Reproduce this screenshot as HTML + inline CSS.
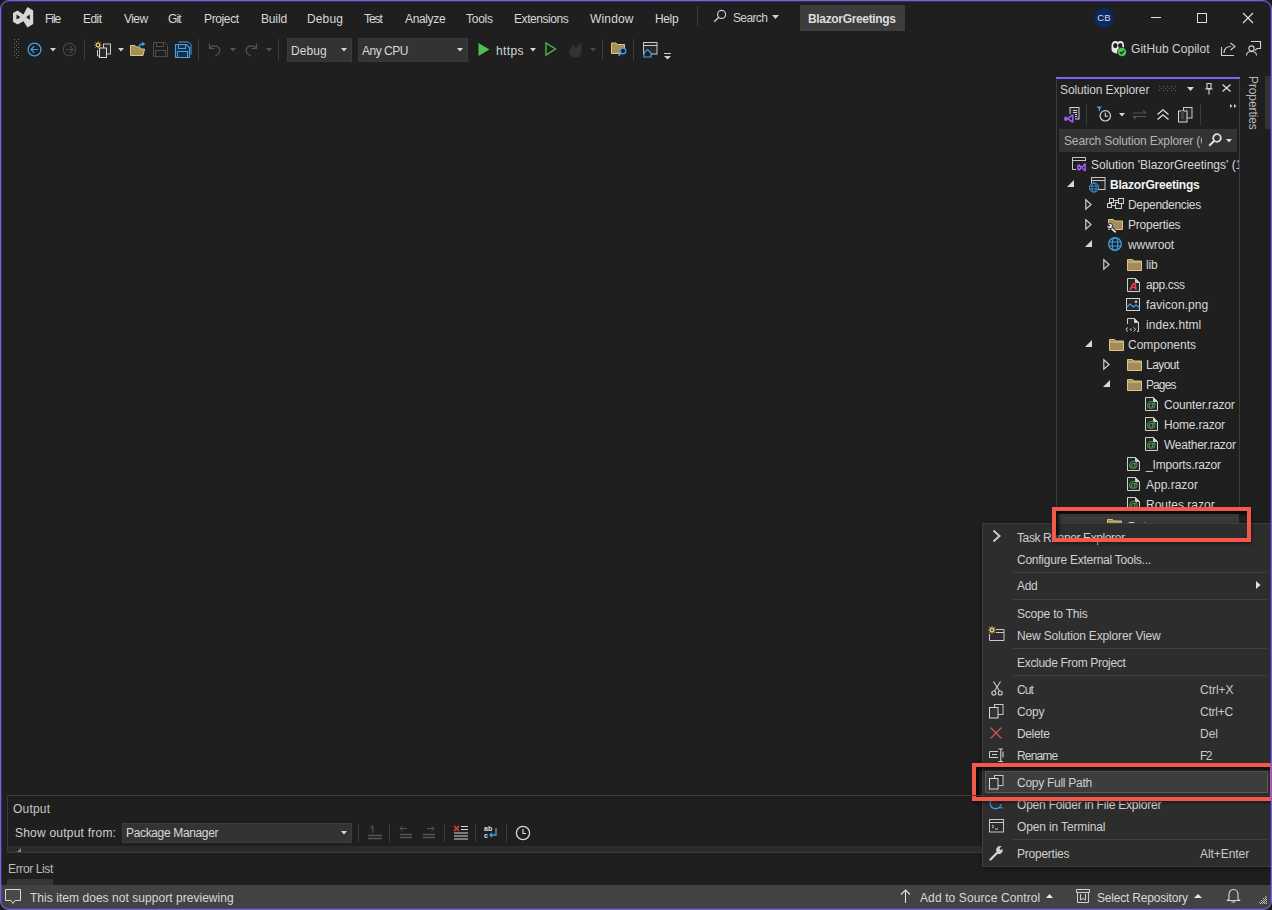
<!DOCTYPE html>
<html><head><meta charset="utf-8">
<style>
*{margin:0;padding:0;box-sizing:border-box}
html,body{width:1272px;height:910px;overflow:hidden;background:#1a1a1a}
body{position:relative;font-family:"Liberation Sans",sans-serif;font-size:12px;color:#f0f0f0}
.win{position:absolute;left:0;top:0;width:1272px;height:910px;background:#1f1f1f;overflow:hidden}
.frame{position:absolute;left:0;top:0;width:1272px;height:910px;border:1px solid #7662ea;border-radius:9px;box-shadow:0 0 0 12px #1a1a1a, inset 0 0 0 1px rgba(118,98,234,0.28);pointer-events:none}
.a{position:absolute;white-space:nowrap}
.t{position:absolute;white-space:nowrap;line-height:14px;height:14px}
svg.a{overflow:visible}
</style></head><body>
<div class="win">

<svg class="a" style="left:12px;top:6px" width="22" height="22" viewBox="0 0 22 22"><path d="M1 7 L5.5 4.5 L11.5 8.6 L15.4 1 L21.2 4.4 L21.2 18 L15.4 21.4 L11.5 15.2 L5.5 18.5 L1 15.7 Z" fill="#d6d6d6"/><path d="M4.5 8.6 L8.5 11.2 L4.5 13.6 Z" fill="#1f1f1f"/><path d="M17.8 8.4 L14.2 11.2 L17.8 14 Z" fill="#1f1f1f"/></svg>
<span class="t" id="w1" style="left:45px;top:12px;color:rgb(216,216,216);;letter-spacing:-1.021px">File</span>
<span class="t" id="w2" style="left:83px;top:12px;color:rgb(216,216,216);;letter-spacing:-0.548px">Edit</span>
<span class="t" id="w3" style="left:124px;top:12px;color:rgb(216,216,216);;letter-spacing:-0.542px">View</span>
<span class="t" id="w4" style="left:168px;top:12px;color:rgb(216,216,216);;letter-spacing:-0.900px">Git</span>
<span class="t" id="w5" style="left:204px;top:12px;color:rgb(216,216,216);;letter-spacing:-0.369px">Project</span>
<span class="t" id="w6" style="left:261px;top:12px;color:rgb(216,216,216);;letter-spacing:-0.152px">Build</span>
<span class="t" id="w7" style="left:307px;top:12px;color:rgb(216,216,216);;letter-spacing:0.128px">Debug</span>
<span class="t" id="w8" style="left:364px;top:12px;color:rgb(216,216,216);;letter-spacing:-1.058px">Test</span>
<span class="t" id="w9" style="left:405px;top:12px;color:rgb(216,216,216);;letter-spacing:-0.353px">Analyze</span>
<span class="t" id="w10" style="left:466px;top:12px;color:rgb(216,216,216);;letter-spacing:-0.253px">Tools</span>
<span class="t" id="w11" style="left:514px;top:12px;color:rgb(216,216,216);;letter-spacing:-0.433px">Extensions</span>
<span class="t" id="w12" style="left:590px;top:12px;color:rgb(216,216,216);;letter-spacing:0.157px">Window</span>
<span class="t" id="w13" style="left:655px;top:12px;color:rgb(216,216,216);;letter-spacing:-0.369px">Help</span>
<div class="a" style="left:697px;top:6px;width:1px;height:20px;background:#3d3d3d"></div>
<svg class="a" style="left:713px;top:9px" width="14" height="14" viewBox="0 0 14 14"><circle cx="8.6" cy="5.4" r="4" fill="none" stroke="#d0d0d0" stroke-width="1.2"/><path d="M5.8 8.2 L1.2 12.8" stroke="#d0d0d0" stroke-width="1.3"/></svg>
<span class="t" id="w14" style="left:733px;top:11px;color:rgb(208,208,208);;letter-spacing:-0.630px">Search</span>
<svg class="a" style="left:772px;top:15px" width="7" height="4" viewBox="0 0 7 4"><path d="M0 0 H7 L3.5 4 Z" fill="#d0d0d0"/></svg>
<div class="a" style="left:800px;top:5px;width:105px;height:26px;background:#3d3d3d"></div>
<span class="t" id="w15" style="left:808px;top:12px;color:rgb(219,219,219);font-weight:bold;letter-spacing:-0.337px">BlazorGreetings</span>
<div class="a" style="left:1094px;top:8px;width:20px;height:20px;background:#0c2a60;border-radius:50%"></div>
<span class="t" style="left:1094px;top:11px;width:20px;text-align:center;font-size:9.5px;color:#dcdcdc;letter-spacing:0.2px">CB</span>
<div class="a" style="left:1151px;top:17px;width:10px;height:1px;background:#e0e0e0"></div>
<div class="a" style="left:1197px;top:13px;width:10px;height:10px;border:1px solid #e0e0e0"></div>
<svg class="a" style="left:1243px;top:13px" width="10" height="10" viewBox="0 0 10 10"><path d="M0 0 L10 10 M10 0 L0 10" stroke="#e0e0e0" stroke-width="1.1"/></svg>
<svg class="a" style="left:14px;top:39px" width="6" height="20" viewBox="0 0 6 20"><rect x="0" y="0" width="1" height="1" fill="#707070"/><rect x="4" y="0" width="1" height="1" fill="#707070"/><rect x="2" y="2" width="1" height="1" fill="#707070"/><rect x="0" y="4" width="1" height="1" fill="#707070"/><rect x="4" y="4" width="1" height="1" fill="#707070"/><rect x="2" y="6" width="1" height="1" fill="#707070"/><rect x="0" y="8" width="1" height="1" fill="#707070"/><rect x="4" y="8" width="1" height="1" fill="#707070"/><rect x="2" y="10" width="1" height="1" fill="#707070"/><rect x="0" y="12" width="1" height="1" fill="#707070"/><rect x="4" y="12" width="1" height="1" fill="#707070"/><rect x="2" y="14" width="1" height="1" fill="#707070"/><rect x="0" y="16" width="1" height="1" fill="#707070"/><rect x="4" y="16" width="1" height="1" fill="#707070"/><rect x="2" y="18" width="1" height="1" fill="#707070"/></svg>
<svg class="a" style="left:27px;top:42px" width="15" height="15" viewBox="0 0 15 15"><circle cx="7.5" cy="7.5" r="6.4" fill="none" stroke="#3ea0ec" stroke-width="1.3"/><path d="M4 7.5 H11.2 M7.2 4.2 L4 7.5 L7.2 10.8" fill="none" stroke="#3ea0ec" stroke-width="1.2"/></svg>
<svg class="a" style="left:50px;top:48px" width="6" height="4" viewBox="0 0 6 4"><path d="M0 0 H6 L3 3.5 Z" fill="#d0d0d0"/></svg>
<svg class="a" style="left:62px;top:42px" width="15" height="15" viewBox="0 0 15 15"><circle cx="7.5" cy="7.5" r="6.2" fill="none" stroke="#4a4a4a" stroke-width="1.1"/><path d="M3.8 7.5 H11 M7.8 4.2 L11 7.5 L7.8 10.8" fill="none" stroke="#4a4a4a" stroke-width="1.1"/></svg>
<div class="a" style="left:84px;top:39px;width:1px;height:21px;background:#3d3d3d"></div>
<svg class="a" style="left:94px;top:41px" width="18" height="17" viewBox="0 0 18 17"><g stroke="#e8c46a" stroke-width="1"><path d="M4 0.5 V7.5 M0.5 4 H7.5 M1.5 1.5 L6.5 6.5 M6.5 1.5 L1.5 6.5"/></g><circle cx="4" cy="4" r="1.6" fill="#1f1f1f" stroke="#e8c46a"/><rect x="9.5" y="3" width="7" height="10" fill="#2a2a2a" stroke="#c8c8c8"/><rect x="5.5" y="7" width="7" height="9.5" fill="#2a2a2a" stroke="#d8d8d8"/><path d="M3.5 9 V15 H5.5" fill="none" stroke="#c8c8c8"/></svg>
<svg class="a" style="left:118px;top:48px" width="6" height="4" viewBox="0 0 6 4"><path d="M0 0 H6 L3 3.5 Z" fill="#d0d0d0"/></svg>
<svg class="a" style="left:130px;top:41px" width="16" height="15" viewBox="0 0 16 15"><path d="M0.5 4.5 H5 L6.5 6 H10 V8 H14.5 L13 14.5 H0.5 Z" fill="#a38e5c" stroke="#e6c674" stroke-width="1"/><path d="M9 7 C9 4 10.5 3 13 3" fill="none" stroke="#3ea0ec" stroke-width="1.4"/><path d="M12 0.8 L15.5 3 L12 5.2 Z" fill="#3ea0ec"/></svg>
<svg class="a" style="left:153px;top:42px" width="15" height="15" viewBox="0 0 15 15"><path d="M0.5 0.5 H11.5 L14.5 3.5 V14.5 H0.5 Z" fill="none" stroke="#4d4d4d"/><rect x="3.5" y="0.5" width="7" height="4" fill="none" stroke="#4d4d4d"/><rect x="2.5" y="8.5" width="10" height="6" fill="none" stroke="#4d4d4d"/></svg>
<svg class="a" style="left:175px;top:41px" width="17" height="17" viewBox="0 0 17 17"><path d="M3.5 1 H13.5 L16 3.5 V13.5" fill="none" stroke="#3ea0ec"/><path d="M0.5 3.5 H11.5 L14.5 6.5 V16.5 H0.5 Z" fill="#1f2f40" stroke="#3ea0ec" stroke-width="1.2"/><rect x="3.5" y="3.5" width="7" height="4" fill="none" stroke="#3ea0ec"/><rect x="2.5" y="10.5" width="10" height="6" fill="none" stroke="#3ea0ec"/></svg>
<div class="a" style="left:198px;top:39px;width:1px;height:21px;background:#3d3d3d"></div>
<svg class="a" style="left:207px;top:42px" width="15" height="15" viewBox="0 0 15 15"><path d="M2.5 1.5 V6.5 H7.5" fill="none" stroke="#555" stroke-width="1.2"/><path d="M3 6 C5 3 11 3 12.5 7 C13.5 10 11 13 8 14" fill="none" stroke="#555" stroke-width="1.2"/></svg>
<svg class="a" style="left:230px;top:48px" width="6" height="4" viewBox="0 0 6 4"><path d="M0 0 H6 L3 3.5 Z" fill="#555"/></svg>
<svg class="a" style="left:244px;top:42px" width="15" height="15" viewBox="0 0 15 15"><path d="M12.5 1.5 V6.5 H7.5" fill="none" stroke="#555" stroke-width="1.2"/><path d="M12 6 C10 3 4 3 2.5 7 C1.5 10 4 13 7 14" fill="none" stroke="#555" stroke-width="1.2"/></svg>
<svg class="a" style="left:266px;top:48px" width="6" height="4" viewBox="0 0 6 4"><path d="M0 0 H6 L3 3.5 Z" fill="#555"/></svg>
<div class="a" style="left:278px;top:39px;width:1px;height:21px;background:#3d3d3d"></div>
<div class="a" style="left:287px;top:38px;width:65px;height:24px;background:#333333;border:1px solid #3a3a3a"></div>
<span class="t" id="w16" style="left:291px;top:44px;color:rgb(216,216,216);;letter-spacing:0.053px">Debug</span>
<svg class="a" style="left:341px;top:48px" width="6" height="4" viewBox="0 0 6 4"><path d="M0 0 H6 L3 3.5 Z" fill="#d8d8d8"/></svg>
<div class="a" style="left:358px;top:38px;width:110px;height:24px;background:#333333;border:1px solid #3a3a3a"></div>
<span class="t" id="w17" style="left:362px;top:44px;color:rgb(216,216,216);;letter-spacing:-0.497px">Any CPU</span>
<svg class="a" style="left:457px;top:48px" width="6" height="4" viewBox="0 0 6 4"><path d="M0 0 H6 L3 3.5 Z" fill="#d8d8d8"/></svg>
<svg class="a" style="left:478px;top:43px" width="12" height="13" viewBox="0 0 12 13"><path d="M0.5 0 L11.5 6.5 L0.5 13 Z" fill="#4ec052"/></svg>
<span class="t" id="w18" style="left:496px;top:44px;color:rgb(216,216,216);;letter-spacing:0.371px">https</span>
<svg class="a" style="left:530px;top:48px" width="6" height="4" viewBox="0 0 6 4"><path d="M0 0 H6 L3 3.5 Z" fill="#d8d8d8"/></svg>
<svg class="a" style="left:545px;top:42px" width="12" height="14" viewBox="0 0 12 14"><path d="M1 1 L10.5 7 L1 13 Z" fill="none" stroke="#4ec052" stroke-width="1.3"/></svg>
<svg class="a" style="left:568px;top:42px" width="15" height="16" viewBox="0 0 15 16"><path d="M7 15.5 C2 15.5 0.5 12 1.5 8.5 C2.5 6 4.5 5 5.5 2.5 C7 4 7.5 5.5 7.5 7 C9 5 10.5 2 14 0.5 C12 4 14.5 7 13.5 10.5 C12.8 13.5 10.5 15.5 7 15.5 Z" fill="#333"/></svg>
<svg class="a" style="left:590px;top:48px" width="6" height="4" viewBox="0 0 6 4"><path d="M0 0 H6 L3 3.5 Z" fill="#4a4a4a"/></svg>
<div class="a" style="left:602px;top:39px;width:1px;height:21px;background:#3d3d3d"></div>
<svg class="a" style="left:611px;top:42px" width="17" height="15" viewBox="0 0 17 15"><path d="M0.5 1 H5 L6.5 2.5 H13.5 V11.5 H0.5 Z" fill="#a38e5c" stroke="#e6c674"/><circle cx="12" cy="9" r="2.8" fill="#1f1f1f" stroke="#3ea0ec" stroke-width="1.3"/><path d="M10 11 L7.5 14" stroke="#3ea0ec" stroke-width="1.3"/></svg>
<div class="a" style="left:633px;top:39px;width:1px;height:21px;background:#3d3d3d"></div>
<svg class="a" style="left:643px;top:42px" width="15" height="16" viewBox="0 0 15 16"><rect x="0.5" y="0.5" width="13.5" height="11.5" fill="#2a2a2a" stroke="#c8c8c8"/><path d="M0.5 3.5 H14" stroke="#c8c8c8"/><path d="M1 11 L4.5 7.5 L8 11 V15 H1 Z" fill="#1f1f1f" stroke="#3ea0ec" stroke-width="1.2"/></svg>
<svg class="a" style="left:664px;top:53px" width="7" height="7" viewBox="0 0 7 7"><path d="M0 0.5 H7" stroke="#d0d0d0"/><path d="M0 3 H7 L3.5 6.5 Z" fill="#d0d0d0"/></svg>
<svg class="a" style="left:1110px;top:40px" width="17" height="17" viewBox="0 0 17 17"><path d="M1.5 6 C1.5 2.5 3 1 5.5 1 C6.8 1 7.5 1.5 8 2 C8.5 1.5 9.2 1 10.5 1 C13 1 14 2.5 14 6 V9 C14 12 11 13.5 7.8 13.5 C4.5 13.5 1.5 12 1.5 9 Z" fill="#e8e8e8"/><ellipse cx="5.3" cy="5.6" rx="2.2" ry="2.6" fill="#1f1f1f"/><ellipse cx="10.3" cy="5.6" rx="2.2" ry="2.6" fill="#1f1f1f"/><circle cx="12" cy="12" r="4.6" fill="#4cc85a" stroke="#1f1f1f" stroke-width="0.8"/><path d="M9.8 12 L11.4 13.6 L14.2 10.6" fill="none" stroke="#0c200c" stroke-width="1.2"/></svg>
<span class="t" id="w19" style="left:1131px;top:42px;color:rgb(208,208,208);;letter-spacing:0.046px">GitHub Copilot</span>
<svg class="a" style="left:1221px;top:42px" width="15" height="14" viewBox="0 0 15 14"><path d="M0.5 5 V13.5 H13" fill="none" stroke="#d0d0d0" stroke-width="1.1"/><path d="M3 11 C3 6 6 4.5 10 4.5" fill="none" stroke="#d0d0d0" stroke-width="1.2"/><path d="M9.5 1 L14 4.5 L9.5 8" fill="none" stroke="#d0d0d0" stroke-width="1.1"/></svg>
<svg class="a" style="left:1246px;top:41px" width="15" height="15" viewBox="0 0 15 15"><path d="M5 0.5 H14.5 V7.5 H11 L9 9.5" fill="none" stroke="#d0d0d0" stroke-width="1.1"/><circle cx="5.5" cy="7.5" r="2.6" fill="#1f1f1f" stroke="#d0d0d0" stroke-width="1.1"/><path d="M0.5 14.5 C0.5 11.5 2.5 10.5 5.5 10.5 C8.5 10.5 10.5 11.5 10.5 14.5" fill="none" stroke="#d0d0d0" stroke-width="1.1"/></svg>
<!--SE-->
<div class="a" style="left:1056px;top:77px;width:184px;height:450px;border-left:1px solid #3b3b3b;border-right:1px solid #3b3b3b"></div>
<div class="a" style="left:1056px;top:77px;width:184px;height:2px;background:#7a66f0"></div>
<span class="t" id="w20" style="left:1060px;top:83px;color:rgb(208,208,208);;letter-spacing:-0.124px">Solution Explorer</span>
<svg class="a" style="left:1159px;top:86px" width="18" height="5" viewBox="0 0 18 5"><rect x="0" y="0" width="1" height="1" fill="#606060"/><rect x="4" y="0" width="1" height="1" fill="#606060"/><rect x="8" y="0" width="1" height="1" fill="#606060"/><rect x="12" y="0" width="1" height="1" fill="#606060"/><rect x="16" y="0" width="1" height="1" fill="#606060"/><rect x="2" y="2" width="1" height="1" fill="#606060"/><rect x="6" y="2" width="1" height="1" fill="#606060"/><rect x="10" y="2" width="1" height="1" fill="#606060"/><rect x="14" y="2" width="1" height="1" fill="#606060"/><rect x="0" y="4" width="1" height="1" fill="#606060"/><rect x="4" y="4" width="1" height="1" fill="#606060"/><rect x="8" y="4" width="1" height="1" fill="#606060"/><rect x="12" y="4" width="1" height="1" fill="#606060"/><rect x="16" y="4" width="1" height="1" fill="#606060"/></svg>
<svg class="a" style="left:1187px;top:87px" width="7" height="4" viewBox="0 0 7 4"><path d="M0 0 H7 L3.5 4 Z" fill="#d8d8d8"/></svg>
<svg class="a" style="left:1205px;top:83px" width="8" height="12" viewBox="0 0 8 12"><path d="M2 0.5 H6 V5.5 H2 Z" fill="none" stroke="#d8d8d8" stroke-width="1.1"/><path d="M0.3 6 H7.7 M4 6 V11.5" fill="none" stroke="#d8d8d8" stroke-width="1.1"/></svg>
<svg class="a" style="left:1221.5px;top:84px" width="9" height="8" viewBox="0 0 9 8"><path d="M0.5 0.5 L8.5 7.5 M8.5 0.5 L0.5 7.5" stroke="#e0e0e0" stroke-width="1.2"/></svg>
<svg class="a" style="left:1064px;top:107px" width="16" height="16" viewBox="0 0 16 16"><rect x="6" y="0.5" width="9" height="11.5" fill="#2a2a2a" stroke="#d0d0d0"/><path d="M9 3.5 H13 M9 5.5 H13 M9 7.5 H13 M9 9.5 H13" stroke="#d0d0d0"/><path d="M0 7 H11 V16 H0 Z" fill="#1f1f1f"/><path d="M1 10 V13.5 M1.2 10 L8.5 15 M1.2 13.5 L8.5 8 M8.8 7.5 V15.5" fill="none" stroke="#9b59f0" stroke-width="1.6"/></svg>
<div class="a" style="left:1086px;top:104px;width:1px;height:21px;background:#3d3d3d"></div>
<svg class="a" style="left:1096px;top:106px" width="17" height="17" viewBox="0 0 17 17"><path d="M0.5 0.5 H6 L4 3 V5.5 L2.8 4.5 V3 Z" fill="#3ea0ec"/><circle cx="9.3" cy="9.8" r="5.2" fill="none" stroke="#d8d8d8" stroke-width="1.2"/><path d="M9.3 6.8 V10.2 H12" fill="none" stroke="#d8d8d8" stroke-width="1.1"/></svg>
<svg class="a" style="left:1119px;top:113px" width="6" height="4" viewBox="0 0 6 4"><path d="M0 0 H6 L3 3.5 Z" fill="#d8d8d8"/></svg>
<svg class="a" style="left:1133px;top:110px" width="14" height="10" viewBox="0 0 14 10"><path d="M0 3 H13 M10 0.5 L13 3 M13 6.5 H0 M3 9 L0 6.5" fill="none" stroke="#555" stroke-width="1.1"/></svg>
<svg class="a" style="left:1157px;top:109px" width="12" height="11" viewBox="0 0 12 11"><path d="M0.5 5.5 L6 0.8 L11.5 5.5 M0.5 10.5 L6 5.8 L11.5 10.5" fill="none" stroke="#e0e0e0" stroke-width="1.3"/></svg>
<svg class="a" style="left:1178px;top:107px" width="15" height="16" viewBox="0 0 15 16"><rect x="5.5" y="0.5" width="8.5" height="10.5" fill="#2a2a2a" stroke="#c8c8c8"/><rect x="0.5" y="4" width="8.5" height="11" fill="#2a2a2a" stroke="#d8d8d8"/><rect x="3" y="4" width="3" height="8" fill="#444"/></svg>
<div class="a" style="left:1200px;top:104px;width:1px;height:21px;background:#3d3d3d"></div>
<svg class="a" style="left:1230px;top:104px" width="7" height="4" viewBox="0 0 7 4"><path d="M0 0 L2.5 2 L0 4 Z M4 0 L6.5 2 L4 4 Z" fill="#d0d0d0"/></svg>
<div class="a" style="left:1059px;top:129px;width:178px;height:23px;background:#333333"></div>
<span class="t" style="left:1064px;top:134px;color:rgb(180,180,180);width:138px;overflow:hidden;letter-spacing:-0.15px">Search Solution Explorer (Ctrl+;)</span>
<svg class="a" style="left:1208px;top:133px" width="14" height="14" viewBox="0 0 14 14"><circle cx="9" cy="5" r="3.8" fill="none" stroke="#e0e0e0" stroke-width="1.8"/><path d="M6.5 7.5 L1.2 12.8" stroke="#e0e0e0" stroke-width="2"/></svg>
<svg class="a" style="left:1226px;top:139px" width="6" height="4" viewBox="0 0 6 4"><path d="M0 0 H6 L3 3.5 Z" fill="#d8d8d8"/></svg>
<div class="a" style="left:1057px;top:153px;width:182px;height:354px;overflow:hidden">
<svg class="a" style="left:15px;top:4px" width="15" height="15"><path d="M4 12.5 H0.5 V0.5 H13.5 V4" fill="none" stroke="#c8c8c8"/><path d="M0.5 3.5 H13.5" stroke="#c8c8c8"/><path d="M5 8.5 L7 7 L10 9.5 L12.5 6 L14 7 V13.5 L12.5 14.5 L10 11.5 L7 14 L5 12.5 Z" fill="#9b59f0"/><path d="M6.5 9.5 L8.3 10.7 L6.5 11.8 Z M12.5 9 L10.8 10.7 L12.5 12.3 Z" fill="#1f1f1f"/></svg>
<span class="t" style="left:34px;top:5px;color:rgb(216,216,216);">Solution 'BlazorGreetings' (1 of 1 project)</span>
<svg class="a" style="left:10px;top:27px" width="7" height="7"><path d="M7 0 V7 H0 Z" fill="#d8d8d8"/></svg>
<svg class="a" style="left:32px;top:24px" width="17" height="15"><rect x="2.5" y="0.5" width="13.5" height="12" fill="#262626" stroke="#c8c8c8"/><path d="M2.5 3.5 H16" stroke="#c8c8c8"/><g transform="translate(0 5.5) scale(0.72)"><circle cx="7" cy="7" r="6.3" fill="#1f1f1f" stroke="#3ea0ec" stroke-width="1.3"/><ellipse cx="7" cy="7" rx="2.8" ry="6.3" fill="none" stroke="#3ea0ec" stroke-width="1.1"/><path d="M0.8 5 H13.2 M0.8 9 H13.2" stroke="#3ea0ec" stroke-width="1.1"/></g></svg>
<span class="t" id="w21" style="left:53px;top:25px;color:rgb(216,216,216);font-weight:bold;color:#f4f4f4;letter-spacing:-0.208px">BlazorGreetings</span>
<svg class="a" style="left:28px;top:46px" width="7" height="11"><path d="M0.8 0.8 L6 5.5 L0.8 10.2 Z" fill="none" stroke="#d0d0d0" stroke-width="1.2"/></svg>
<svg class="a" style="left:49.5px;top:45px" width="17" height="12"><rect x="0.5" y="5.5" width="4" height="4" fill="none" stroke="#d0d0d0"/><rect x="2.5" y="0.5" width="4" height="4" fill="none" stroke="#d0d0d0"/><rect x="8.5" y="4.5" width="6" height="6" fill="#262626" stroke="#d0d0d0"/><rect x="11.5" y="0.5" width="5" height="5" fill="#262626" stroke="#d0d0d0"/><path d="M4.5 7.5 H8.5 M6.5 2.5 H11.5" stroke="#d0d0d0"/></svg>
<span class="t" id="w22" style="left:71px;top:45px;color:rgb(216,216,216);;letter-spacing:-0.320px">Dependencies</span>
<svg class="a" style="left:28px;top:66px" width="7" height="11"><path d="M0.8 0.8 L6 5.5 L0.8 10.2 Z" fill="none" stroke="#d0d0d0" stroke-width="1.2"/></svg>
<svg class="a" style="left:50px;top:65px" width="16" height="15"><path d="M1.5 1.5 H6.5 L8 3 H15.5 V11.5 H1.5 Z" fill="#a08c60" stroke="#e3c477"/><path d="M3.5 9.5 L8.2 13.8" stroke="#1f1f1f" stroke-width="3.6" stroke-linecap="round"/><path d="M3.5 9.5 L8.2 13.8" stroke="#e0e0e0" stroke-width="1.8" stroke-linecap="round"/><circle cx="2.8" cy="8" r="2.8" fill="#e0e0e0" stroke="#1f1f1f" stroke-width="0.8"/><path d="M0 6 L2.6 8.2" stroke="#1f1f1f" stroke-width="1.6"/></svg>
<span class="t" id="w23" style="left:71px;top:65px;color:rgb(216,216,216);;letter-spacing:-0.232px">Properties</span>
<svg class="a" style="left:28px;top:87px" width="7" height="7"><path d="M7 0 V7 H0 Z" fill="#d8d8d8"/></svg>
<svg class="a" style="left:51px;top:84px" width="15" height="15"><circle cx="7" cy="7" r="6.3" fill="#1f1f1f" stroke="#3ea0ec" stroke-width="1.3"/><ellipse cx="7" cy="7" rx="2.8" ry="6.3" fill="none" stroke="#3ea0ec" stroke-width="1.1"/><path d="M0.8 5 H13.2 M0.8 9 H13.2" stroke="#3ea0ec" stroke-width="1.1"/></svg>
<span class="t" id="w24" style="left:71px;top:85px;color:rgb(216,216,216);;letter-spacing:-0.090px">wwwroot</span>
<svg class="a" style="left:46px;top:106px" width="7" height="11"><path d="M0.8 0.8 L6 5.5 L0.8 10.2 Z" fill="none" stroke="#d0d0d0" stroke-width="1.2"/></svg>
<svg class="a" style="left:69.5px;top:105px" width="15" height="13"><path d="M0.5 1.5 H5.5 L7 3 H14.5 V12.5 H0.5 Z" fill="#a08c60" stroke="#e3c477"/><path d="M0.5 4 H14.5" stroke="#e3c477"/></svg>
<span class="t" id="w25" style="left:89px;top:105px;color:rgb(216,216,216);;letter-spacing:-0.216px">lib</span>
<svg class="a" style="left:70px;top:125px" width="13" height="14"><path d="M0.5 0.5 H8.5 L12.5 4.5 V13.5 H0.5 Z" fill="#262626" stroke="#d0d0d0"/><path d="M8.5 0.5 V4.5 H12.5" fill="#d0d0d0" stroke="#d0d0d0"/><path d="M3 12 L6.5 5.5 L8 5.5 L9 12 M4.5 9.5 H8.5" fill="none" stroke="#e8405a" stroke-width="1.6"/></svg>
<span class="t" id="w26" style="left:89px;top:125px;color:rgb(216,216,216);;letter-spacing:-0.393px">app.css</span>
<svg class="a" style="left:69px;top:145px" width="15" height="13"><rect x="0.5" y="0.5" width="13" height="12" fill="#262626" stroke="#d0d0d0"/><circle cx="10" cy="3.8" r="1.3" fill="#e8c46a"/><path d="M1 9 L4 6 L7.5 9 L10 7 L13.5 9.5" fill="none" stroke="#3ea0ec" stroke-width="1.1"/></svg>
<span class="t" id="w27" style="left:89px;top:145px;color:rgb(216,216,216);;letter-spacing:0.090px">favicon.png</span>
<svg class="a" style="left:68px;top:165px" width="15" height="15"><path d="M2.5 6 V0.5 H9.5 L13.5 4.5 V13.5 H12" fill="#262626" stroke="#d0d0d0"/><path d="M9.5 0.5 V4.5 H13.5" fill="#d0d0d0" stroke="#d0d0d0"/><path d="M3 9.5 L0.8 11.5 L3 13.5 M8.5 9.5 L10.7 11.5 L8.5 13.5" fill="none" stroke="#d0d0d0"/><circle cx="5.8" cy="11.5" r="1.2" fill="#3ea0ec"/></svg>
<span class="t" id="w28" style="left:89px;top:165px;color:rgb(216,216,216);;letter-spacing:0.064px">index.html</span>
<svg class="a" style="left:28px;top:187px" width="7" height="7"><path d="M7 0 V7 H0 Z" fill="#d8d8d8"/></svg>
<svg class="a" style="left:51.5px;top:185px" width="15" height="13"><path d="M0.5 1.5 H5.5 L7 3 H14.5 V12.5 H0.5 Z" fill="#a08c60" stroke="#e3c477"/><path d="M0.5 4 H14.5" stroke="#e3c477"/></svg>
<span class="t" id="w29" style="left:71px;top:185px;color:rgb(216,216,216);;letter-spacing:-0.004px">Components</span>
<svg class="a" style="left:46px;top:206px" width="7" height="11"><path d="M0.8 0.8 L6 5.5 L0.8 10.2 Z" fill="none" stroke="#d0d0d0" stroke-width="1.2"/></svg>
<svg class="a" style="left:69.5px;top:205px" width="15" height="13"><path d="M0.5 1.5 H5.5 L7 3 H14.5 V12.5 H0.5 Z" fill="#a08c60" stroke="#e3c477"/><path d="M0.5 4 H14.5" stroke="#e3c477"/></svg>
<span class="t" id="w30" style="left:89px;top:205px;color:rgb(216,216,216);;letter-spacing:-0.539px">Layout</span>
<svg class="a" style="left:46px;top:227px" width="7" height="7"><path d="M7 0 V7 H0 Z" fill="#d8d8d8"/></svg>
<svg class="a" style="left:69.5px;top:225px" width="15" height="13"><path d="M0.5 1.5 H5.5 L7 3 H14.5 V12.5 H0.5 Z" fill="#a08c60" stroke="#e3c477"/><path d="M0.5 4 H14.5" stroke="#e3c477"/></svg>
<span class="t" id="w31" style="left:89px;top:225px;color:rgb(216,216,216);;letter-spacing:-0.906px">Pages</span>
<svg class="a" style="left:88px;top:244px" width="13" height="14"><path d="M0.5 0.5 H8.5 L12.5 4.5 V13.5 H0.5 Z" fill="#262626" stroke="#d0d0d0"/><path d="M8.5 0.5 V4.5 H12.5" fill="#d0d0d0" stroke="#d0d0d0"/><text x="1.6" y="11.3" font-size="9.5" font-family="Liberation Sans" fill="#5ec46a">@</text></svg>
<span class="t" id="w32" style="left:107px;top:245px;color:rgb(216,216,216);;letter-spacing:-0.159px">Counter.razor</span>
<svg class="a" style="left:88px;top:264px" width="13" height="14"><path d="M0.5 0.5 H8.5 L12.5 4.5 V13.5 H0.5 Z" fill="#262626" stroke="#d0d0d0"/><path d="M8.5 0.5 V4.5 H12.5" fill="#d0d0d0" stroke="#d0d0d0"/><text x="1.6" y="11.3" font-size="9.5" font-family="Liberation Sans" fill="#5ec46a">@</text></svg>
<span class="t" id="w33" style="left:107px;top:265px;color:rgb(216,216,216);;letter-spacing:-0.176px">Home.razor</span>
<svg class="a" style="left:88px;top:284px" width="13" height="14"><path d="M0.5 0.5 H8.5 L12.5 4.5 V13.5 H0.5 Z" fill="#262626" stroke="#d0d0d0"/><path d="M8.5 0.5 V4.5 H12.5" fill="#d0d0d0" stroke="#d0d0d0"/><text x="1.6" y="11.3" font-size="9.5" font-family="Liberation Sans" fill="#5ec46a">@</text></svg>
<span class="t" id="w34" style="left:107px;top:285px;color:rgb(216,216,216);;letter-spacing:-0.263px">Weather.razor</span>
<svg class="a" style="left:70px;top:304px" width="13" height="14"><path d="M0.5 0.5 H8.5 L12.5 4.5 V13.5 H0.5 Z" fill="#262626" stroke="#d0d0d0"/><path d="M8.5 0.5 V4.5 H12.5" fill="#d0d0d0" stroke="#d0d0d0"/><text x="1.6" y="11.3" font-size="9.5" font-family="Liberation Sans" fill="#5ec46a">@</text></svg>
<span class="t" id="w35" style="left:89px;top:305px;color:rgb(216,216,216);;letter-spacing:-0.181px">_Imports.razor</span>
<svg class="a" style="left:70px;top:324px" width="13" height="14"><path d="M0.5 0.5 H8.5 L12.5 4.5 V13.5 H0.5 Z" fill="#262626" stroke="#d0d0d0"/><path d="M8.5 0.5 V4.5 H12.5" fill="#d0d0d0" stroke="#d0d0d0"/><text x="1.6" y="11.3" font-size="9.5" font-family="Liberation Sans" fill="#5ec46a">@</text></svg>
<span class="t" id="w36" style="left:89px;top:325px;color:rgb(216,216,216);;letter-spacing:-0.004px">App.razor</span>
<svg class="a" style="left:70px;top:344px" width="13" height="14"><path d="M0.5 0.5 H8.5 L12.5 4.5 V13.5 H0.5 Z" fill="#262626" stroke="#d0d0d0"/><path d="M8.5 0.5 V4.5 H12.5" fill="#d0d0d0" stroke="#d0d0d0"/><text x="1.6" y="11.3" font-size="9.5" font-family="Liberation Sans" fill="#5ec46a">@</text></svg>
<span class="t" style="left:89px;top:345px;color:rgb(216,216,216);">Routes.razor</span>
</div>
<div class="a" style="left:1057px;top:514px;width:182px;height:10px;background:#3a3a3a;border-top:1px solid #4a4a4a;overflow:hidden"></div>
<div class="a" style="left:1057px;top:515px;width:182px;height:9px;overflow:hidden"><svg class="a" style="left:50px;top:3px" width="15" height="13"><path d="M0.5 1.5 H5.5 L7 3 H14.5 V12.5 H0.5 Z" fill="#a08c60" stroke="#e3c477"/><path d="M0.5 4 H14.5" stroke="#e3c477"/></svg><span class="t" style="left:71px;top:5px;color:#e8e8e8">Data</span></div>
<div class="a" style="left:1239px;top:511px;width:9px;height:13px;background:#1f1f1f"></div>
<span class="t" style="left:1246px;top:76px;width:14px;height:53px;color:#b8b8b8;writing-mode:vertical-rl;line-height:14px;letter-spacing:-0.1px">Properties</span>
<div class="a" style="left:1265px;top:76px;width:6px;height:53px;background:#333333"></div>
<!--MENU-->
<div class="a" style="left:982px;top:523px;width:290px;height:344px;background:#2d2d2d;border:1px solid #3c3c3c;box-shadow:0 2px 6px rgba(0,0,0,0.4)"></div>
<div class="a" style="left:1013px;top:572px;width:254px;height:1px;background:#3f3f3f"></div>
<div class="a" style="left:1013px;top:599px;width:254px;height:1px;background:#3f3f3f"></div>
<div class="a" style="left:1013px;top:648px;width:254px;height:1px;background:#3f3f3f"></div>
<div class="a" style="left:1013px;top:675px;width:254px;height:1px;background:#3f3f3f"></div>
<div class="a" style="left:1013px;top:839px;width:254px;height:1px;background:#3f3f3f"></div>
<div class="a" style="left:985px;top:771px;width:283px;height:22px;background:#3d3d3d;border:1px solid #5a5a5a"></div>
<span class="t" id="w37" style="left:1017px;top:531px;color:rgb(208,208,208);;letter-spacing:-0.389px">Task Runner Explorer</span>
<svg class="a" style="left:992px;top:529px" width="10" height="14" viewBox="0 0 10 14"><path d="M1.5 1.5 L7.5 7 L1.5 12.5" fill="none" stroke="#c8c8c8" stroke-width="2"/></svg>
<span class="t" id="w38" style="left:1017px;top:553px;color:rgb(208,208,208);;letter-spacing:-0.246px">Configure External Tools...</span>
<span class="t" id="w39" style="left:1017px;top:579px;color:rgb(208,208,208);;letter-spacing:-0.339px">Add</span>
<svg class="a" style="left:1256px;top:581px" width="5" height="8" viewBox="0 0 5 8"><path d="M0 0 L4.5 4 L0 8 Z" fill="#e0e0e0"/></svg>
<span class="t" id="w40" style="left:1017px;top:607px;color:rgb(208,208,208);;letter-spacing:-0.198px">Scope to This</span>
<span class="t" id="w41" style="left:1017px;top:629px;color:rgb(208,208,208);;letter-spacing:-0.167px">New Solution Explorer View</span>
<svg class="a" style="left:988px;top:626px" width="17" height="16" viewBox="0 0 17 16"><path d="M1.5 8 V14.5 H16 V3.5 H8" fill="#2b2b2b" stroke="#c8c8c8"/><path d="M8 6.5 H16" stroke="#c8c8c8"/><g stroke="#e3c070" stroke-width="1.1"><path d="M4 0.3 V7.7 M0.3 4 H7.7 M1.4 1.4 L6.6 6.6 M6.6 1.4 L1.4 6.6"/></g><circle cx="4" cy="4" r="2.2" fill="#e3c070"/><circle cx="4" cy="4" r="0.9" fill="#2b2b2b"/></svg>
<span class="t" id="w42" style="left:1017px;top:656px;color:rgb(208,208,208);;letter-spacing:-0.309px">Exclude From Project</span>
<span class="t" id="w43" style="left:1017px;top:683px;color:rgb(208,208,208);;letter-spacing:-0.920px">Cut</span>
<span class="t" id="w44" style="left:1200px;top:683px;color:rgb(201,201,201);;letter-spacing:-0.034px">Ctrl+X</span>
<svg class="a" style="left:991px;top:681px" width="12" height="15" viewBox="0 0 12 15"><path d="M2.5 0.5 L8.5 10 M9.5 0.5 L3.5 10" stroke="#d0d0d0" stroke-width="1.1"/><circle cx="2.8" cy="12" r="2" fill="none" stroke="#d0d0d0" stroke-width="1.1"/><circle cx="9.2" cy="12" r="2" fill="none" stroke="#d0d0d0" stroke-width="1.1"/></svg>
<span class="t" id="w45" style="left:1017px;top:705px;color:rgb(208,208,208);;letter-spacing:-0.171px">Copy</span>
<span class="t" id="w46" style="left:1200px;top:705px;color:rgb(201,201,201);;letter-spacing:-0.234px">Ctrl+C</span>
<svg class="a" style="left:989px;top:704px" width="15" height="15" viewBox="0 0 15 15"><rect x="5.5" y="0.5" width="8.5" height="10" fill="#2b2b2b" stroke="#c8c8c8"/><rect x="0.5" y="3.5" width="8.5" height="10.5" fill="#333" stroke="#d8d8d8"/></svg>
<span class="t" id="w47" style="left:1017px;top:727px;color:rgb(208,208,208);;letter-spacing:-0.363px">Delete</span>
<span class="t" id="w48" style="left:1200px;top:727px;color:rgb(201,201,201);;letter-spacing:-0.020px">Del</span>
<svg class="a" style="left:990px;top:727px" width="12" height="12" viewBox="0 0 12 12"><path d="M0.5 0.5 L11.5 11.5 M11.5 0.5 L0.5 11.5" stroke="#e05060" stroke-width="1.1"/></svg>
<span class="t" id="w49" style="left:1017px;top:749px;color:rgb(208,208,208);;letter-spacing:-0.837px">Rename</span>
<span class="t" id="w50" style="left:1200px;top:749px;color:rgb(201,201,201);;letter-spacing:-1.630px">F2</span>
<svg class="a" style="left:989px;top:748px" width="15" height="15" viewBox="0 0 15 15"><path d="M9 3.5 H0.5 V9.5 H9" fill="none" stroke="#d0d0d0"/><path d="M3 6.5 H8" stroke="#d0d0d0"/><path d="M9.5 1 H14 M11.8 1 V13.5 M9.5 13.5 H14 M14 3.5 V9.5" fill="none" stroke="#d0d0d0" stroke-width="1.1"/></svg>
<span class="t" id="w51" style="left:1017px;top:776px;color:rgb(208,208,208);;letter-spacing:-0.271px">Copy Full Path</span>
<svg class="a" style="left:989px;top:775px" width="15" height="15" viewBox="0 0 15 15"><rect x="5.5" y="0.5" width="8.5" height="10" fill="#2b2b2b" stroke="#c8c8c8"/><rect x="0.5" y="3.5" width="8.5" height="10.5" fill="#333" stroke="#d8d8d8"/></svg>
<span class="t" id="w52" style="left:1017px;top:798px;color:rgb(208,208,208);;letter-spacing:-0.206px">Open Folder in File Explorer</span>
<svg class="a" style="left:989px;top:797px" width="14" height="14" viewBox="0 0 14 14"><path d="M3 2 C0.5 4 0.5 8 3 10.5 C5 12 8.5 12 10.5 10.5" fill="none" stroke="#3ea0ec" stroke-width="1.2"/><path d="M12.5 7 L10.5 10.5 L13.5 11" fill="none" stroke="#3ea0ec" stroke-width="1.1"/></svg>
<span class="t" id="w53" style="left:1017px;top:820px;color:rgb(208,208,208);;letter-spacing:-0.136px">Open in Terminal</span>
<svg class="a" style="left:989px;top:818px" width="16" height="16" viewBox="0 0 16 16"><rect x="0.5" y="1.5" width="14" height="12.5" fill="#2b2b2b" stroke="#c8c8c8"/><path d="M0.5 4.5 H14.5" stroke="#c8c8c8"/><path d="M3 7 L5 8.5 L3 10 M6 11 H9" fill="none" stroke="#d0d0d0"/></svg>
<span class="t" id="w54" style="left:1017px;top:847px;color:rgb(208,208,208);;letter-spacing:-0.243px">Properties</span>
<span class="t" id="w55" style="left:1200px;top:847px;color:rgb(201,201,201);;letter-spacing:-0.062px">Alt+Enter</span>
<svg class="a" style="left:989px;top:845px" width="15" height="16" viewBox="0 0 15 16"><path d="M1.5 14.5 L8 8" stroke="#d0d0d0" stroke-width="2.4" stroke-linecap="round"/><path d="M7 5.5 C7 2.5 9.5 0.5 12.5 1.2 L10.5 3.5 L11.5 5 L13.5 4 C14.5 7 12 9.5 9 9 Z" fill="#d0d0d0"/></svg>
<div class="a" style="left:1052px;top:507px;width:199px;height:35px;border:4px solid #f2594b;box-shadow:inset 3px 3px 3px rgba(0,0,0,0.7), 1px 2px 3px rgba(0,0,0,0.4)"></div>
<div class="a" style="left:972px;top:763px;width:302px;height:38px;border:4px solid #f2594b;box-shadow:inset 3px 3px 3px rgba(0,0,0,0.7), 1px 2px 3px rgba(0,0,0,0.4)"></div>
<!--OUTPUT-->
<div class="a" style="left:7px;top:795px;width:975px;height:58px;border:1px solid #3a3a3a;border-right:none"></div>
<span class="t" id="w56" style="left:13px;top:802px;color:rgb(198,198,198);;letter-spacing:0.202px">Output</span>
<span class="t" id="w57" style="left:15px;top:826px;color:rgb(208,208,208);;letter-spacing:0.222px">Show output from:</span>
<div class="a" style="left:122px;top:823px;width:230px;height:20px;background:#333333;border:1px solid #3d3d3d"></div>
<span class="t" id="w58" style="left:126px;top:826px;color:rgb(216,216,216);;letter-spacing:-0.350px">Package Manager</span>
<svg class="a" style="left:341px;top:831px" width="6" height="4" viewBox="0 0 6 4"><path d="M0 0 H6 L3 3.5 Z" fill="#d8d8d8"/></svg>
<div class="a" style="left:358px;top:824px;width:1px;height:18px;background:#3d3d3d"></div>
<div class="a" style="left:389px;top:824px;width:1px;height:18px;background:#3d3d3d"></div>
<div class="a" style="left:444px;top:824px;width:1px;height:18px;background:#3d3d3d"></div>
<div class="a" style="left:475px;top:824px;width:1px;height:18px;background:#3d3d3d"></div>
<div class="a" style="left:506px;top:824px;width:1px;height:18px;background:#3d3d3d"></div>
<svg class="a" style="left:367px;top:825px" width="16" height="15" viewBox="0 0 16 15"><path d="M6 1 V8 M6 1 C3 1 3 4 6 4" fill="none" stroke="#555"/><path d="M1 10.5 H15 M1 13.5 H15" stroke="#555" stroke-width="1.3"/></svg>
<svg class="a" style="left:399px;top:825px" width="14" height="15" viewBox="0 0 14 15"><path d="M1 3.5 H8 M3.5 1 L1 3.5 L3.5 6" fill="none" stroke="#555"/><path d="M1 9.5 H13 M1 12.5 H13" stroke="#555" stroke-width="1.3"/></svg>
<svg class="a" style="left:422px;top:825px" width="14" height="15" viewBox="0 0 14 15"><path d="M5 3.5 H12 M9.5 1 L12 3.5 L9.5 6" fill="none" stroke="#555"/><path d="M1 9.5 H13 M1 12.5 H13" stroke="#555" stroke-width="1.3"/></svg>
<svg class="a" style="left:453px;top:825px" width="16" height="15" viewBox="0 0 16 15"><path d="M1 1 L6 6 M6 1 L1 6" stroke="#e8404a" stroke-width="1.3"/><path d="M8 1.5 H15 M8 4.5 H15 M1 8 H15 M1 11 H15 M1 14 H15" stroke="#d8d8d8" stroke-width="1.2"/></svg>
<svg class="a" style="left:484px;top:825px" width="16" height="15" viewBox="0 0 16 15"><text x="0" y="6" font-size="7" font-family="Liberation Sans" fill="#e0e0e0" font-weight="bold">ab</text><text x="0" y="13" font-size="7" font-family="Liberation Sans" fill="#e0e0e0" font-weight="bold">c</text><path d="M12 3 V10 H6 M8 8 L6 10 L8 12" fill="none" stroke="#3ea0ec" stroke-width="1.3"/></svg>
<svg class="a" style="left:515px;top:825px" width="16" height="16" viewBox="0 0 16 16"><circle cx="8" cy="8" r="6.6" fill="none" stroke="#d8d8d8" stroke-width="1.3"/><path d="M8 4 V8.5 H11" fill="none" stroke="#d8d8d8" stroke-width="1.2"/></svg>
<div class="a" style="left:8px;top:846px;width:974px;height:6px;background:#2b2b2b"></div>
<svg class="a" style="left:17px;top:848px" width="4" height="4" viewBox="0 0 4 4"><path d="M4 0 V4 H0 Z" fill="#888"/></svg>
<span class="t" id="w59" style="left:8px;top:862px;color:rgb(187,187,187);;letter-spacing:-0.371px">Error List</span>
<div class="a" style="left:7px;top:879px;width:46px;height:6px;background:#363636"></div>
<!--STATUS-->
<div class="a" style="left:0px;top:885px;width:1272px;height:25px;background:#424242"></div>
<svg class="a" style="left:5px;top:889px" width="17" height="16" viewBox="0 0 17 16"><path d="M0.5 0.5 H15.5 V11.5 H10 L8 14.5 L6 11.5 H0.5 Z" fill="#4a4a4a" stroke="#d8d8d8"/></svg>
<span class="t" id="w60" style="left:30px;top:891px;color:rgb(216,216,216);;letter-spacing:0.044px">This item does not support previewing</span>
<svg class="a" style="left:900px;top:889px" width="11" height="14" viewBox="0 0 11 14"><path d="M5.5 1 V14 M1 5.5 L5.5 1 L10 5.5" fill="none" stroke="#e0e0e0" stroke-width="1.1"/></svg>
<span class="t" id="w61" style="left:920px;top:891px;color:rgb(216,216,216);;letter-spacing:0.110px">Add to Source Control</span>
<svg class="a" style="left:1046px;top:894px" width="7" height="4" viewBox="0 0 7 4"><path d="M0 4 H7 L3.5 0 Z" fill="#e8e8e8"/></svg>
<svg class="a" style="left:1076px;top:889px" width="14" height="14" viewBox="0 0 14 14"><path d="M0.5 0.5 H13.5 V3.5 H0.5 Z M1.5 3.5 V13.5 H12.5 V3.5" fill="none" stroke="#d0d0d0"/><path d="M4.5 5 V11 L7 9.5 L9.5 11 V5" fill="none" stroke="#d0d0d0"/></svg>
<span class="t" id="w62" style="left:1097px;top:891px;color:rgb(216,216,216);;letter-spacing:-0.190px">Select Repository</span>
<svg class="a" style="left:1194px;top:894px" width="8" height="4" viewBox="0 0 8 4"><path d="M0 4 H8 L4 0 Z" fill="#e8e8e8"/></svg>
<svg class="a" style="left:1227px;top:888px" width="13" height="15" viewBox="0 0 13 15"><path d="M2 11 V6.5 C2 3.5 4 1.5 6.5 1.5 C9 1.5 11 3.5 11 6.5 V11 L12.5 12.5 H0.5 Z" fill="none" stroke="#d8d8d8" stroke-width="1.1"/><path d="M4.5 14 H8.5" stroke="#d8d8d8"/></svg>
<svg class="a" style="left:1259px;top:896px" width="8" height="8" viewBox="0 0 8 8"><rect x="6" y="0" width="1" height="1" fill="#bdbdbd"/><rect x="7" y="1" width="1" height="1" fill="#bdbdbd"/><rect x="4" y="2" width="1" height="1" fill="#bdbdbd"/><rect x="6" y="2" width="1" height="1" fill="#bdbdbd"/><rect x="5" y="3" width="1" height="1" fill="#bdbdbd"/><rect x="7" y="3" width="1" height="1" fill="#bdbdbd"/><rect x="2" y="4" width="1" height="1" fill="#bdbdbd"/><rect x="4" y="4" width="1" height="1" fill="#bdbdbd"/><rect x="6" y="4" width="1" height="1" fill="#bdbdbd"/><rect x="3" y="5" width="1" height="1" fill="#bdbdbd"/><rect x="5" y="5" width="1" height="1" fill="#bdbdbd"/><rect x="7" y="5" width="1" height="1" fill="#bdbdbd"/><rect x="0" y="6" width="1" height="1" fill="#bdbdbd"/><rect x="2" y="6" width="1" height="1" fill="#bdbdbd"/><rect x="4" y="6" width="1" height="1" fill="#bdbdbd"/><rect x="6" y="6" width="1" height="1" fill="#bdbdbd"/><rect x="1" y="7" width="1" height="1" fill="#bdbdbd"/><rect x="3" y="7" width="1" height="1" fill="#bdbdbd"/><rect x="5" y="7" width="1" height="1" fill="#bdbdbd"/><rect x="7" y="7" width="1" height="1" fill="#bdbdbd"/></svg>
<div class="frame"></div>
</div>
</body></html>
